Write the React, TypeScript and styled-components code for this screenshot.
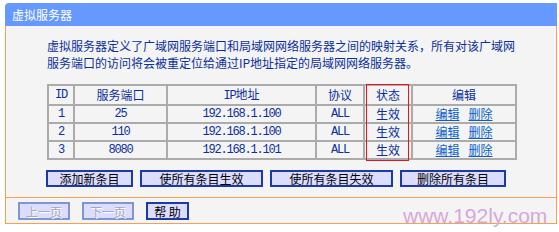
import styled, { createGlobalStyle } from "styled-components";

const GlobalStyle = createGlobalStyle`
  html, body {
    margin: 0;
    padding: 0;
    background: #ffffff;
  }
  body {
    font-family: "Noto Sans CJK SC", "Liberation Sans", sans-serif;
    font-size: 12px;
  }
`;

const ORANGE = "#f6a050";
const TEXT_BLUE = "#0a2f9c";

const Page = styled.div`
  position: relative;
  width: 559px;
  height: 232px;
  padding-top: 3px;
  padding-left: 5px;
  box-sizing: border-box;
`;

const Panel = styled.div`
  width: 552px;
`;

const TitleBar = styled.div`
  height: 23px;
  background: #6699ff;
  border-top-left-radius: 4px;
  color: #ffffff;
  font-size: 12px;
  line-height: 23px;
  padding-left: 7px;
`;

const Body = styled.div`
  background: #f4f4f4;
  border-left: 1px solid ${ORANGE};
  border-right: 1px solid ${ORANGE};
  border-bottom: 1px solid ${ORANGE};
`;

const Content = styled.div`
  padding: 11px 0 10px 41px;
  border-bottom: 1px solid ${ORANGE};
`;

const Intro = styled.p`
  margin: 0;
  width: 472px;
  color: ${TEXT_BLUE};
  font-size: 12px;
  line-height: 17px;
`;

const TableWrap = styled.div`
  position: relative;
  width: 468px;
  margin-top: 13px;
`;

const Table = styled.table`
  width: 468px;
  border-collapse: collapse;
  table-layout: fixed;
`;

const Cell = styled.td<{ $mono?: boolean }>`
  height: 16px;
  padding: 0;
  border: 2px solid #ababab;
  text-align: center;
  vertical-align: middle;
  color: ${TEXT_BLUE};
  font-size: 12px;
  line-height: 16px;
  font-family: ${(p) =>
    p.$mono
      ? `"Liberation Mono", "Noto Sans CJK SC", monospace`
      : `"Noto Sans CJK SC", "Liberation Sans", sans-serif`};
  letter-spacing: ${(p) => (p.$mono ? "-1.2px" : "0")};
`;

const HeadCell = styled(Cell).attrs({ as: "th" })`
  font-weight: normal;
`;

const Link = styled.a`
  color: #0a5fd0;
  text-decoration: underline;
  cursor: pointer;
  & + & {
    margin-left: 9px;
  }
`;

const StatusMark = styled.div`
  position: absolute;
  left: 319px;
  top: 0;
  width: 43px;
  height: 77px;
  border: 1.5px solid #e8141a;
  box-sizing: border-box;
  pointer-events: none;
`;

const ButtonRow = styled.div`
  display: flex;
  gap: 7px;
  margin-top: 10px;
  margin-left: -1px;
`;

const Button = styled.button<{ $w: number; $disabled?: boolean }>`
  width: ${(p) => p.$w}px;
  height: ${(p) => (p.$disabled !== undefined ? 18 : 17)}px;
  padding: 0;
  box-sizing: border-box;
  background: #dcdcff;
  border: 2px solid ${(p) => (p.$disabled ? "#7f95d6" : "#1b3aa6")};
  color: ${(p) => (p.$disabled ? "#a8a8b4" : "#000000")};
  text-shadow: ${(p) => (p.$disabled ? "1px 1px 0 #ffffff" : "none")};
  font-family: "Noto Sans CJK SC", "Liberation Sans", sans-serif;
  font-size: 12px;
  line-height: 13px;
  text-align: center;
  cursor: ${(p) => (p.$disabled ? "default" : "pointer")};
`;

const NavRow = styled.div`
  display: flex;
  gap: 12px;
  padding: 4px 0 2px 12px;
  height: 25px;
  box-sizing: border-box;
`;

const Watermark = styled.div`
  position: absolute;
  left: 403px;
  top: 205px;
  font-family: "Liberation Sans", Arial, sans-serif;
  font-size: 21px;
  line-height: 21px;
  color: #d6a8da;
  pointer-events: none;
`;

const rows = [
  { id: "1", port: "25", ip: "192.168.1.100", proto: "ALL", status: "生效" },
  { id: "2", port: "110", ip: "192.168.1.100", proto: "ALL", status: "生效" },
  { id: "3", port: "8080", ip: "192.168.1.101", proto: "ALL", status: "生效" },
];

const colWidths = [26, 93, 149, 48, 48, 104];

export default function App() {
  return (
    <>
      <GlobalStyle />
      <Page>
        <Panel>
          <TitleBar>虚拟服务器</TitleBar>
          <Body>
            <Content>
              <Intro>
                虚拟服务器定义了广域网服务端口和局域网网络服务器之间的映射关系，所有对该广域网服务端口的访问将会被重定位给通过IP地址指定的局域网网络服务器。
              </Intro>
              <TableWrap>
                <Table>
                  <colgroup>
                    {colWidths.map((w, i) => (
                      <col key={i} style={{ width: w }} />
                    ))}
                  </colgroup>
                  <thead>
                    <tr>
                      <HeadCell $mono>ID</HeadCell>
                      <HeadCell>服务端口</HeadCell>
                      <HeadCell>
                        <span style={{ fontFamily: '"Liberation Mono", monospace', letterSpacing: "-1.2px" }}>IP</span>地址
                      </HeadCell>
                      <HeadCell>协议</HeadCell>
                      <HeadCell>状态</HeadCell>
                      <HeadCell>编辑</HeadCell>
                    </tr>
                  </thead>
                  <tbody>
                    {rows.map((r) => (
                      <tr key={r.id}>
                        <Cell $mono>{r.id}</Cell>
                        <Cell $mono>{r.port}</Cell>
                        <Cell $mono>{r.ip}</Cell>
                        <Cell $mono>{r.proto}</Cell>
                        <Cell>{r.status}</Cell>
                        <Cell>
                          <Link>编辑</Link>
                          <Link>删除</Link>
                        </Cell>
                      </tr>
                    ))}
                  </tbody>
                </Table>
                <StatusMark />
              </TableWrap>
              <ButtonRow>
                <Button $w={87}>添加新条目</Button>
                <Button $w={123}>使所有条目生效</Button>
                <Button $w={123}>使所有条目失效</Button>
                <Button $w={106}>删除所有条目</Button>
              </ButtonRow>
            </Content>
            <NavRow>
              <Button $w={52} $disabled>上一页</Button>
              <Button $w={52} $disabled>下一页</Button>
              <Button $w={43} $disabled={false}>帮 助</Button>
            </NavRow>
          </Body>
        </Panel>
        <Watermark>www.192ly.com</Watermark>
      </Page>
    </>
  );
}
